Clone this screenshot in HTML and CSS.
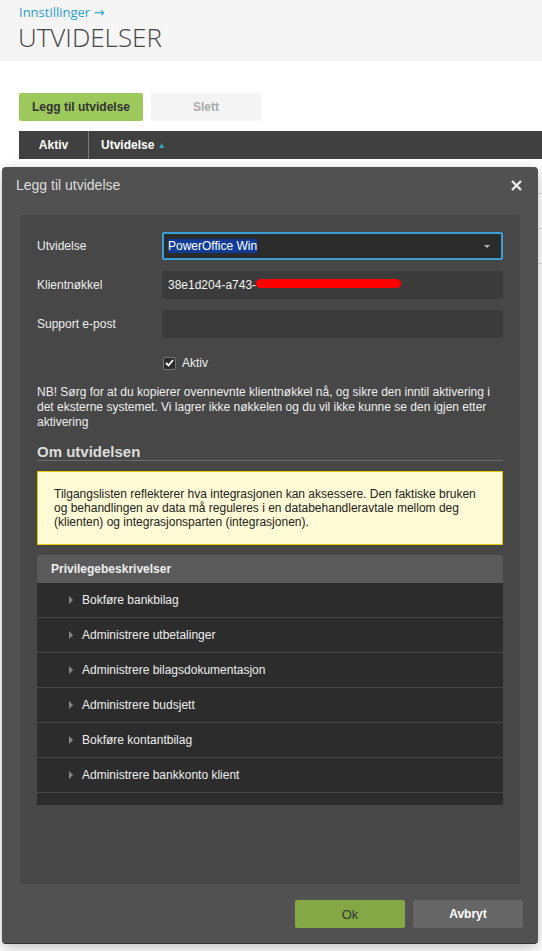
FILE: index.html
```html
<!DOCTYPE html>
<html lang="no">
<head>
    <meta charset="UTF-8">
    <title>Utvidelser</title>
    <link rel="stylesheet" href="styles.css">
</head>
<body>
    <!-- Page header -->
    <div class="page-head">
        <a class="crumb" href="#">Innstillinger <span class="crumb-arrow">&rarr;</span></a>
        <h1 class="page-title">UTVIDELSER</h1>
    </div>

    <div class="toolbar">
        <button class="btn btn-add">Legg til utvidelse</button>
        <button class="btn btn-delete">Slett</button>
    </div>

    <div class="grid">
        <div class="grid-head">
            <div class="col-active">Aktiv</div>
            <div class="col-name">Utvidelse <span class="sort-arrow">&#9650;</span></div>
        </div>
        <div class="grid-row"></div>
        <div class="grid-row"></div>
        <div class="grid-row"></div>
    </div>

    <!-- Modal dialog -->
    <div class="modal">
        <div class="modal-head">
            <span class="modal-title">Legg til utvidelse</span>
            <svg class="modal-close" width="11" height="11" viewBox="0 0 11 11">
                <path d="M1 1 L10 10 M10 1 L1 10" stroke="#ececec" stroke-width="2.4" stroke-linecap="butt"/>
            </svg>
        </div>

        <div class="modal-body">
            <div class="panel">
                <div class="form-row">
                    <label class="form-label">Utvidelse</label>
                    <div class="field select-field">
                        <span class="selected-text">PowerOffice Win</span>
                        <span class="caret"></span>
                    </div>
                </div>
                <div class="form-row">
                    <label class="form-label">Klientnøkkel</label>
                    <div class="field key-field">
                        <span>38e1d204-a743-</span>
                        <span class="redact"></span>
                    </div>
                </div>
                <div class="form-row">
                    <label class="form-label">Support e-post</label>
                    <div class="field"></div>
                </div>
                <div class="check-row">
                    <span class="checkbox">
                        <svg width="9" height="8" viewBox="0 0 9 8">
                            <path d="M1 4 L3.5 6.5 L8 1" fill="none" stroke="#fff" stroke-width="1.8"/>
                        </svg>
                    </span>
                    <span>Aktiv</span>
                </div>

                <p class="notice">NB! Sørg for at du kopierer ovennevnte klientnøkkel nå, og sikre den inntil aktivering i det eksterne systemet. Vi lagrer ikke nøkkelen og du vil ikke kunne se den igjen etter aktivering</p>

                <h2 class="section-title">Om utvidelsen</h2>

                <div class="info-box">Tilgangslisten reflekterer hva integrasjonen kan aksessere. Den faktiske bruken og behandlingen av data må reguleres i en databehandleravtale mellom deg (klienten) og integrasjonsparten (integrasjonen).</div>

                <div class="privileges">
                    <div class="privileges-head">Privilegebeskrivelser</div>
                    <div class="privileges-list">
                        <div class="privilege"><span class="arrow"></span>Bokføre bankbilag</div>
                        <div class="privilege"><span class="arrow"></span>Administrere utbetalinger</div>
                        <div class="privilege"><span class="arrow"></span>Administrere bilagsdokumentasjon</div>
                        <div class="privilege"><span class="arrow"></span>Administrere budsjett</div>
                        <div class="privilege"><span class="arrow"></span>Bokføre kontantbilag</div>
                        <div class="privilege"><span class="arrow"></span>Administrere bankkonto klient</div>
                    </div>
                </div>
            </div>
        </div>

        <div class="modal-foot">
            <button class="btn btn-ok">Ok</button>
            <button class="btn btn-cancel">Avbryt</button>
        </div>
    </div>
</body>
</html>
```

FILE: styles.css
```css
/* Basic reset */
* {
    box-sizing: border-box;
    margin: 0;
    padding: 0;
}

body {
    font-family: "Liberation Sans", Arial, sans-serif;
    font-size: 12px;
    background: #fff;
    color: #333;
    position: relative;
    min-height: 951px;
    overflow: hidden;
}

/* Page header */
.page-head {
    background: #f5f5f5;
    height: 61px;
    padding: 4px 18px 0;
}

.crumb {
    display: block;
    font-family: "Open Sans", sans-serif;
    font-size: 13px;
    line-height: 16px;
    height: 16px;
    color: #2a9fd0;
    text-decoration: none;
    padding-left: 1px;
}

.crumb-arrow {
    font-family: "DejaVu Sans", sans-serif;
    font-size: 13px;
    line-height: 14px;
}

.page-title {
    font-family: "Open Sans", sans-serif;
    font-weight: 300;
    font-size: 26px;
    line-height: 28px;
    margin-top: 3px;
    color: #444;
}

/* Toolbar */
.toolbar {
    display: flex;
    gap: 8px;
    padding: 32px 0 0 19px;
}

.btn {
    font-family: "Liberation Sans", Arial, sans-serif;
    font-size: 12px;
    font-weight: bold;
    border: none;
    height: 28px;
    border-radius: 2px;
    cursor: pointer;
}

.btn-add {
    width: 124px;
    background: #9dc95c;
    color: #333;
}

.btn-delete {
    width: 110px;
    background: #f4f4f4;
    color: #aaa;
}

/* Grid behind the dialog */
.grid {
    margin: 10px 0 0 19px;
}

.grid-head {
    display: flex;
    height: 28px;
    background: #404040;
    color: #fff;
    font-weight: bold;
    font-size: 12px;
    line-height: 28px;
}

.col-active {
    width: 70px;
    text-align: center;
    border-right: 1px solid #7a7a7a;
}

.col-name {
    padding-left: 12px;
}

.sort-arrow {
    color: #3aa6c8;
    font-size: 8px;
    vertical-align: 1px;
}

.grid-row {
    height: 35px;
    border-bottom: 1px solid #ddd;
}

/* Modal */
.modal {
    position: absolute;
    left: 2px;
    top: 167px;
    width: 536px;
    height: 777px;
    background: #515151;
    border-radius: 4px;
    border-bottom: 1px solid #333;
    box-shadow: 0 4px 14px rgba(0, 0, 0, 0.25);
    display: flex;
    flex-direction: column;
}

.modal-head {
    height: 36px;
    padding: 0 16px 0 14px;
    display: flex;
    align-items: center;
    justify-content: space-between;
}

.modal-title {
    font-size: 14px;
    color: #ddd;
}

.modal-close {
    margin-top: 1px;
}

.modal-body {
    flex: 1;
    padding: 12px 18px 0;
    display: flex;
}

.panel {
    flex: 1;
    background: #474747;
    border-radius: 2px;
    padding: 17px 17px 0;
    color: #eee;
}

/* Form */
.form-row {
    display: flex;
    align-items: center;
    margin-bottom: 11px;
}

.form-label {
    width: 125px;
    font-size: 12px;
    color: #eee;
}

.field {
    position: relative;
    flex: 1;
    height: 28px;
    background: #3b3b3b;
    border-radius: 2px;
    padding: 0 6px;
    display: flex;
    align-items: center;
    font-size: 12px;
    color: #f2f2f2;
}

.select-field {
    background: #2b2b2b;
    border: 2px solid #3a9fd4;
    padding: 0 4px;
}

.selected-text {
    background: #103c96;
    color: #fff;
    line-height: 14px;
}

.caret {
    position: absolute;
    right: 11px;
    top: 11px;
    border-left: 3px solid transparent;
    border-right: 3px solid transparent;
    border-top: 3px solid #bbb;
}

.redact {
    position: absolute;
    left: 94px;
    top: 8px;
    width: 145px;
    height: 9px;
    background: #ff0000;
    border-radius: 5px;
}

.check-row {
    display: flex;
    align-items: center;
    gap: 6px;
    margin: 18px 0 0 125px;
    padding-left: 1px;
    font-size: 12px;
}

.checkbox {
    width: 13px;
    height: 13px;
    border: 1px solid #777;
    border-radius: 2px;
    background: #2b2b2b;
    display: flex;
    align-items: center;
    justify-content: center;
}

.notice {
    margin-top: 15px;
    font-size: 12px;
    line-height: 15px;
    color: #eee;
}

.section-title {
    margin-top: 13px;
    font-size: 15px;
    line-height: 17px;
    color: #ddd;
    border-bottom: 1px solid #6a6a6a;
}

.info-box {
    margin-top: 10px;
    background: #fffbd6;
    border: 1px solid #e6c700;
    padding: 15px 16px;
    font-size: 12px;
    line-height: 14px;
    color: #222;
}

/* Privileges */
.privileges {
    margin-top: 10px;
}

.privileges-head {
    height: 28px;
    line-height: 28px;
    background: #5a5a5a;
    border-radius: 3px 3px 0 0;
    padding-left: 14px;
    font-weight: bold;
    color: #eee;
}

.privileges-list {
    background: #2c2c2c;
    padding-bottom: 12px;
}

.privilege {
    height: 35px;
    border-bottom: 1px solid #474747;
    display: flex;
    align-items: center;
    padding-left: 32px;
    color: #eee;
}

.arrow {
    width: 0;
    height: 0;
    border-top: 4px solid transparent;
    border-bottom: 4px solid transparent;
    border-left: 4px solid #888;
    margin-right: 9px;
    margin-top: -1px;
}

/* Footer */
.modal-foot {
    display: flex;
    justify-content: flex-end;
    gap: 8px;
    padding: 16px 15px 15px;
}

.btn-ok {
    width: 110px;
    background: #84a846;
    color: #333;
    font-weight: normal;
    font-size: 13px;
}

.btn-cancel {
    width: 110px;
    background: #666;
    color: #fff;
}
```
